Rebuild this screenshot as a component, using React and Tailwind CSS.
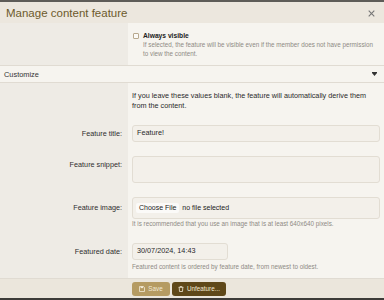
import React from "react";

export default function App() {
  const left = "w-[128px] shrink-0 bg-[#eeebe5]";
  const right = "flex-1 bg-[#f6f4ef]";
  const label = "text-[7.25px] leading-[9px] text-[#2e2e2e] text-right pr-[6px]";
  return (
    <div
      className="w-[384px] h-[300px] overflow-hidden flex flex-col bg-[#f6f4ef]"
      style={{ fontFamily: '"Liberation Sans", Arial, sans-serif' }}
    >
      <div className="h-[2px] shrink-0 bg-[#5e5c58]" />
      {/* header */}
      <div className="h-[21px] shrink-0 bg-[#ece7de] flex items-center justify-between pl-[6px] pr-[9px]">
        <span className="text-[11.5px] leading-[14px] text-[#6d5a2c]">Manage content feature</span>
        <svg width="7" height="7" viewBox="0 0 7 7" className="mt-[1px]">
          <path d="M0.7 0.7 L6.3 6.3 M6.3 0.7 L0.7 6.3" stroke="#777" strokeWidth="1.1" />
        </svg>
      </div>
      {/* always visible row */}
      <div className="flex h-[42px] shrink-0">
        <div className={left} />
        <div className={right + " pl-[5px] pt-[9px]"}>
          <div className="flex items-center gap-[4px]">
            <div className="w-[6px] h-[6px] border border-[#b8a98e] rounded-[1px] bg-[#fbfaf7]" />
            <span className="text-[6.7px] leading-[8px] font-bold text-[#222]">Always visible</span>
          </div>
          <div className="pl-[10px] text-[6.3px] leading-[8.5px] text-[#8e8a84] mt-[1px]">
            If selected, the feature will be visible even if the member does not have permission
            <br />
            to view the content.
          </div>
        </div>
      </div>
      <div className="h-px shrink-0 bg-[#e0dbd2]" />
      {/* customize */}
      <div className="h-[16px] shrink-0 bg-[#f6f4ef] flex items-center justify-between pl-[4px] pr-[7px]">
        <span className="text-[7.4px] leading-[9px] text-[#333]">Customize</span>
        <svg width="5" height="4" viewBox="0 0 5 4">
          <path d="M0 0 H5 V1 L2.5 4 L0 1 Z" fill="#333" />
        </svg>
      </div>
      <div className="h-px shrink-0 bg-[#e0dbd2]" />
      {/* description */}
      <div className="flex shrink-0">
        <div className={left} />
        <div className={right + " pl-[4px] pt-[8px] pb-[14px]"}>
          <div className="text-[7.25px] leading-[10px] text-[#2a2a2a]">
            If you leave these values blank, the feature will automatically derive them
            <br />
            from the content.
          </div>
        </div>
      </div>
      {/* title */}
      <div className="flex shrink-0">
        <div className={left + " flex items-center justify-end"}>
          <span className={label}>Feature title:</span>
        </div>
        <div className={right + " px-[4px]"}>
          <div className="h-[17px] border border-[#e2ddd3] rounded-[3px] bg-[#f3f0ea] flex items-center pl-[4px] text-[7.25px] text-[#2a2a2a]">
            Feature!
          </div>
        </div>
      </div>
      {/* snippet */}
      <div className="flex shrink-0">
        <div className={left + " flex justify-end pt-[18px]"}>
          <span className={label}>Feature snippet:</span>
        </div>
        <div className={right + " px-[4px] pt-[14px]"}>
          <div className="h-[27px] border border-[#e2ddd3] rounded-[3px] bg-[#f3f0ea]" />
        </div>
      </div>
      {/* image */}
      <div className="flex shrink-0">
        <div className={left + " flex justify-end pt-[20px]"}>
          <span className={label}>Feature image:</span>
        </div>
        <div className={right + " px-[4px] pt-[14px]"}>
          <div className="h-[22px] border border-[#e2ddd3] rounded-[3px] bg-[#f3f0ea] flex items-center pl-[3px] gap-[3px]">
            <div className="h-[10px] px-[3px] rounded-[2px] bg-[#fbfaf8] flex items-center text-[7px] text-[#222] leading-[8px]">
              Choose File
            </div>
            <span className="text-[7px] text-[#222] leading-[8px]">no file selected</span>
          </div>
          <div className="mt-[1px] text-[6.3px] leading-[8px] text-[#8e8a84]">
            It is recommended that you use an image that is at least 640x640 pixels.
          </div>
        </div>
      </div>
      {/* date */}
      <div className="flex shrink-0">
        <div className={left + " flex justify-end pt-[19px]"}>
          <span className={label}>Featured date:</span>
        </div>
        <div className={right + " px-[4px] pt-[15px] pb-[7px]"}>
          <div className="w-[96px] h-[17px] border border-[#e2ddd3] rounded-[3px] bg-[#f3f0ea] flex items-center pl-[4px] text-[7.25px] text-[#2a2a2a]">
            30/07/2024, 14:43
          </div>
          <div className="mt-[3px] text-[6.3px] leading-[8px] text-[#8e8a84]">
            Featured content is ordered by feature date, from newest to oldest.
          </div>
        </div>
      </div>
      {/* footer */}
      <div className="h-[20px] shrink-0 bg-[#ebe6dc] border-t border-[#e0dbd2] flex items-center pl-[132px] gap-[2px]">
        <div className="h-[14px] w-[38px] rounded-[3px] bg-[#b59b62] flex items-center justify-center gap-[3px] text-[6.3px] text-[#f3ead6]">
          <svg width="6" height="6" viewBox="0 0 6 6">
            <path d="M0.5 0.5 H4.5 L5.5 1.5 V5.5 H0.5 Z" fill="none" stroke="#f3ead6" strokeWidth="0.8" />
            <rect x="1.6" y="0.5" width="2.6" height="1.6" fill="#f3ead6" />
          </svg>
          Save
        </div>
        <div className="h-[14px] w-[54px] rounded-[3px] bg-[#5f4819] flex items-center justify-center gap-[3px] text-[6.3px] text-[#f3ead6]">
          <svg width="6" height="6" viewBox="0 0 6 6">
            <path d="M0.6 1.3 H5.4 M2.2 1.3 V0.5 H3.8 V1.3 M1.2 1.3 L1.5 5.5 H4.5 L4.8 1.3" fill="none" stroke="#f3ead6" strokeWidth="0.8" />
          </svg>
          Unfeature...
        </div>
      </div>
      <div className="flex-1 bg-[#3d3b38]" />
    </div>
  );
}
